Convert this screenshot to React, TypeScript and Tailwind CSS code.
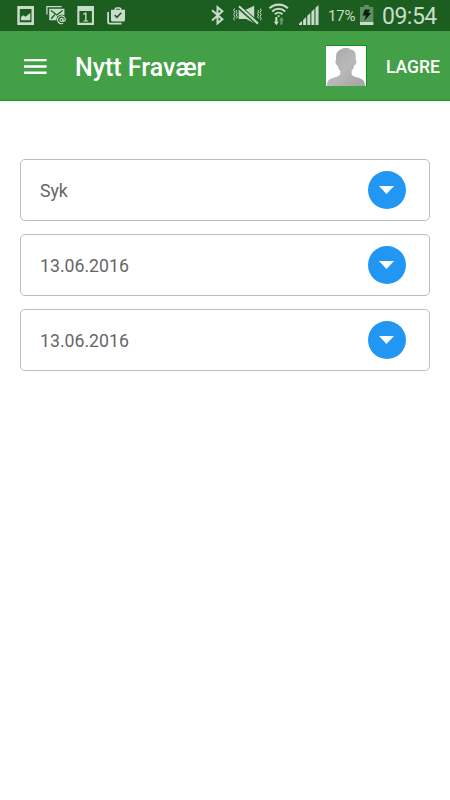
import React, { useState } from 'react';

const ICON = '#c9dcca';
const BAR = '#1b5e20';

// Notification icons, left side of the status bar
function PictureIcon() {
  return (
    <svg width="17" height="21" viewBox="0 0 17 21" className="flex-none">
      <path fill={ICON} fillRule="evenodd" d="M.3 1H17v19H.3zM2.800 4v13.200h11.700V4z" />
      <path fill={ICON} d="M4 15.200V12l2.200-1.800 2.300 1.600L13.300 8v7.200z" />
    </svg>
  );
}

function MailIcon() {
  return (
    <svg width="20" height="21" viewBox="0 0 20 21" className="flex-none">
      <path fill="none" stroke={ICON} strokeWidth="1.300" d="M.9 9.500V1.700h14.800" />
      <path fill={ICON} d="M3.200 3.800h15.200v7.500H11v4H3.200z" />
      <path fill="none" stroke={BAR} strokeWidth="1.300" d="M5 5.500l5.800 4.400 5.800-4.400M5.200 13.800l3.600-4" />
      <circle cx="15.600" cy="14.800" r="5.200" fill={BAR} />
      <circle cx="15.400" cy="14.900" r="1.500" fill="none" stroke={ICON} strokeWidth="1.100" />
      <path fill="none" stroke={ICON} strokeWidth="1.100" d="M17 13.200v2.300c0 1.300 2.300 1.100 2.300-.9a3.900 3.900 0 1 0-2.200 3.700" />
    </svg>
  );
}

function CalendarIcon() {
  return (
    <svg width="17" height="21" viewBox="0 0 17 21" className="flex-none">
      <path fill={ICON} fillRule="evenodd" d="M.3 1H17v19H.3zM2.400 6v11.800h12.500V6z" />
      <path fill={ICON} d="M8.200 7.500h1.300v7.900h1.700v1.200H6.200v-1.200h1.900V9.200l-1.900.6V8.500z" />
    </svg>
  );
}

function BagIcon() {
  return (
    <svg width="19" height="21" viewBox="0 0 19 21" className="flex-none">
      <path fill="none" stroke={ICON} strokeWidth="1.800" d="M1.100 7v10c0 1 .5 1.600 1.500 1.600h12" />
      <path
        fill={ICON}
        fillRule="evenodd"
        d="M4 4.700h3.600V3.500l1.300-1.200h4.200l1.300 1.200v1.200H18v10.200c0 .9-.6 1.500-1.500 1.500h-11c-.9 0-1.500-.6-1.500-1.500zM9.200 3.700v1h3.600v-1z"
      />
      <path fill="none" stroke={BAR} strokeWidth="1.600" d="M7.700 10l2.200 2.300 4.400-4.500" />
    </svg>
  );
}

// System icons, right side of the status bar
function BluetoothIcon() {
  return (
    <svg width="14" height="21" viewBox="0 0 14 21" className="flex-none">
      <path fill="none" stroke={ICON} strokeWidth="2" d="M1 5.300l10.400 9L6.500 18.300V2.200l4.900 4-10.400 9.300" />
    </svg>
  );
}

function MuteIcon() {
  return (
    <svg width="29" height="21" viewBox="0 0 29 21" className="flex-none">
      <g fill="none" stroke={ICON} strokeWidth="1">
        <path d="M1.500 3.500L.7 5.400l1.200 2-1.200 2 1.200 2-1.200 2 .8 1.900" />
        <path d="M4 5l-.7 1.600 1 1.700-1 1.700 1 1.700L3.400 13.500" />
        <path d="M27.400 3.500l.8 1.900-1.200 2 1.200 2-1.200 2 1.200 2-.8 1.900" />
        <path d="M24.900 5l.7 1.600-1 1.700 1 1.700-1 1.700.9 1.800" />
      </g>
      <path fill={ICON} d="M5.700 4.500h7.500L21.200.8v17.500l-8-4.300H5.700z" />
      <path stroke={BAR} strokeWidth="4.600" d="M4 0l21 18.800" />
      <path stroke={ICON} strokeWidth="2.100" d="M6 1.300L25 18.600" />
    </svg>
  );
}

function WifiIcon() {
  return (
    <svg width="20" height="21" viewBox="0 0 20 21" overflow="visible" className="flex-none">
      <g fill="none" stroke={ICON} strokeWidth="2">
        <path d="M.5 3.300C5.700-1.600 13.700-1.600 18.900 3.300" />
        <path d="M3.200 6.400c3.700-3.500 9.300-3.500 13 0" />
        <path d="M5.900 9.300c2.200-2 5.400-2 7.600 0" />
      </g>
      <path fill={ICON} d="M8 10.800c1-.9 2.400-.9 3.400 0l-1.700 1.500z" />
      <path fill={ICON} d="M6.300 12h2.100v4.800h1.400l-2.400 3.500-2.500-3.500h1.400z" />
      <path fill="#6f9c72" d="M12.400 12l2.500 3.500h-1.400v4.300h-2.100v-4.300H10z" />
    </svg>
  );
}

function SignalIcon() {
  return (
    <svg width="20" height="21" viewBox="0 0 20 21" className="flex-none">
      <g fill={ICON}>
        <path d="M0 20v-1.200l3-2.800v4z" />
        <path d="M4.100 14.900l3-3V20h-3z" />
        <path d="M8.300 10.800l3-2.900V20h-3z" />
        <path d="M12.400 6.700l3-2.900V20h-3z" />
        <path d="M16.500 2.700l3-2.700v20h-3z" />
      </g>
    </svg>
  );
}

function BatteryIcon() {
  return (
    <svg width="14" height="21" viewBox="0 0 14 21" className="flex-none">
      <path fill="#5f8f63" d="M4.200 0H9v2h4.300v18H0V2h4.200z" />
      <path fill={ICON} d="M0 17h13.300v3H0z" />
      <path fill="#0d2110" d="M4.700 4.500h5.200L8.500 8.100h2.800L4.300 16l1.600-5.500H2.600z" />
    </svg>
  );
}

function StatusBar() {
  return (
    <div className="flex h-[31px] items-center bg-[#1b5e20] pl-[17px] pr-[13px] text-[#c9dcca]">
      <div className="flex items-center">
        <PictureIcon />
        <div className="ml-[12px] flex"><MailIcon /></div>
        <div className="ml-[11px] flex"><CalendarIcon /></div>
        <div className="ml-[13px] flex"><BagIcon /></div>
      </div>
      <div className="ml-auto flex items-center">
        <BluetoothIcon />
        <div className="ml-[8px] flex"><MuteIcon /></div>
        <div className="ml-[7px] flex"><WifiIcon /></div>
        <div className="ml-[10px] flex"><SignalIcon /></div>
        <span className="ml-[9px] w-[28px] whitespace-nowrap pt-[2px] text-[15px] leading-none tracking-[-0.2px]">17%</span>
        <div className="ml-[4px] flex"><BatteryIcon /></div>
        <span className="ml-[8px] w-[55px] whitespace-nowrap pt-px text-[23px] leading-none tracking-[-0.5px]">09:54</span>
      </div>
    </div>
  );
}

function Avatar() {
  return (
    <svg width="41" height="41" viewBox="0 0 41 41" className="flex-none">
      <defs>
        <linearGradient id="person" x1="0" y1="0" x2="1" y2="1">
          <stop offset="0" stopColor="#a5a5a5" />
          <stop offset=".5" stopColor="#b9b9b9" />
          <stop offset="1" stopColor="#a3a3a3" />
        </linearGradient>
      </defs>
      <path fill="#0b9413" d="M0 0h41v41H0z" />
      <path fill="#fff" d="M0 1h40v40H0z" />
      <path
        fill="url(#person)"
        d="M1 41c.3-4.500 1.200-6.600 4.500-7.600 4-1.200 8.700-2 8.700-4.800v-2.500c-1.400-1.500-2.100-3.500-2.500-5.800-1.500-.2-2-1.600-2.200-3.400-.1-1.200.1-1.800.8-2-.9-5.600.5-9 4.500-10.400 3-1.800 8-2 10.200.2 4.500.5 5.500 4.800 4.600 10.200.8.200 1 .8.800 2-.2 1.800-.8 3.200-2.200 3.400-.4 2.300-1.200 4.300-2.600 5.800v2.500c0 2.800 4.700 3.600 8.700 4.800 3.300 1 4.400 3.100 4.700 7.600z"
      />
    </svg>
  );
}

function Header() {
  return (
    <header className="flex h-[70px] items-center border-b border-[#12981a] bg-[#43a047] pl-[24px] pr-[9px] text-white">
      <button aria-label="Menu" className="mt-[2px] flex-none">
        <svg width="23" height="15" viewBox="0 0 23 15" className="block">
          <path fill="#fff" d="M0 0h22.600v2.300H0zM0 6.300h22.600v2.400H0zM0 12.500h22.600v2.400H0z" />
        </svg>
      </button>
      <h1 className="ml-[28px] whitespace-nowrap pt-[4px] text-[25px] font-medium leading-none">Nytt Fravær</h1>
      <div className="ml-auto flex items-center">
        <Avatar />
        <button className="ml-[19px] w-[55px] whitespace-nowrap pt-[4px] text-left text-[17.5px] font-medium leading-none">LAGRE</button>
      </div>
    </header>
  );
}

function SelectField({ value, onClick }: { value: string; onClick?: () => void }) {
  return (
    <button
      onClick={onClick}
      className="flex h-[62px] w-full items-center justify-between rounded-[5px] border border-[#bdbdbd] pl-[19px] pr-[23px] text-[#666666]"
    >
      <span className="pt-[3px] text-[17.7px] leading-none">{value}</span>
      <span className="flex h-[38.5px] w-[38.5px] items-center justify-center rounded-full bg-[#2196f3]">
        <svg width="15" height="8" viewBox="0 0 15 8">
          <path fill="#fff" d="M0 0h15L7.500 8z" />
        </svg>
      </span>
    </button>
  );
}

export default function App() {
  const [fields] = useState(['Syk', '13.06.2016', '13.06.2016']);

  return (
    <div className="h-[800px] w-[450px] overflow-hidden bg-white font-[Roboto,sans-serif]">
      <StatusBar />
      <Header />
      <main className="flex flex-col gap-[13px] px-5 pt-[58px]">
        {fields.map((value, i) => (
          <SelectField key={i} value={value} />
        ))}
      </main>
    </div>
  );
}
